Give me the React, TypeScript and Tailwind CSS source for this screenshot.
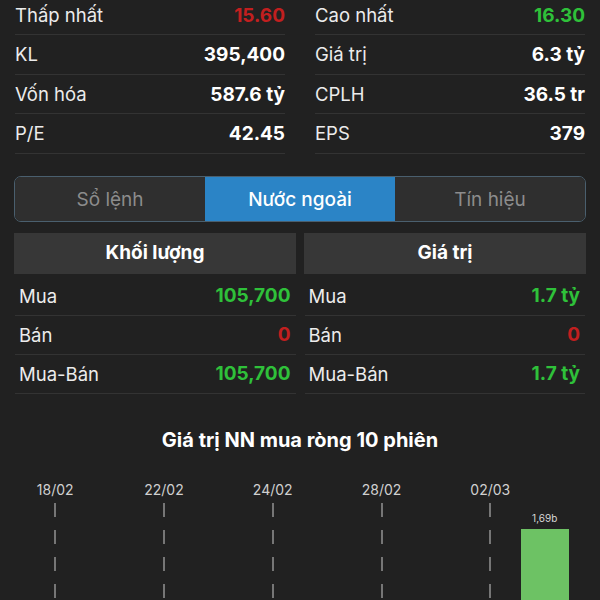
import React from "react";

const stats: [string, string, string?][][] = [
  [
    ["Thấp nhất", "15.60", "red"],
    ["KL", "395,400"],
    ["Vốn hóa", "587.6 tỷ"],
    ["P/E", "42.45"],
  ],
  [
    ["Cao nhất", "16.30", "green"],
    ["Giá trị", "6.3 tỷ"],
    ["CPLH", "36.5 tr"],
    ["EPS", "379"],
  ],
];

const foreign = [
  {
    title: "Khối lượng",
    rows: [
      ["Mua", "105,700", "green"],
      ["Bán", "0", "red"],
      ["Mua-Bán", "105,700", "green"],
    ],
  },
  {
    title: "Giá trị",
    rows: [
      ["Mua", "1.7 tỷ", "green"],
      ["Bán", "0", "red"],
      ["Mua-Bán", "1.7 tỷ", "green"],
    ],
  },
];

const sessions = ["18/02", "", "22/02", "", "24/02", "", "28/02", "", "02/03", ""];

function valueColor(c?: string) {
  if (c === "red") return "text-[#c21f1f]";
  if (c === "green") return "text-[#2fc13a]";
  return "text-white";
}

export default function App() {
  return (
    <div
      className="w-[600px] h-[600px] overflow-hidden bg-[#212121] text-white"
      style={{ fontFamily: "Inter, 'Noto Sans', sans-serif" }}
    >
      {/* Stats */}
      <div className="grid grid-cols-2 gap-x-[30px] px-[15px] -mt-[4.5px]">
        {stats.map((col, ci) => (
          <div key={ci}>
            {col.map(([label, value, color]) => (
              <div
                key={label}
                className="h-[39.5px] pt-[2px] flex items-center justify-between border-b border-[#333333] text-[18.5px]"
              >
                <span className="text-[#ececec]">{label}</span>
                <span className={`font-bold text-[19px] ${valueColor(color)}`}>{value}</span>
              </div>
            ))}
          </div>
        ))}
      </div>

      {/* Tabs */}
      <div className="mx-[14px] mt-[22px] h-[46px] flex rounded-[7px] border border-[#4a5f6e] overflow-hidden text-[19px]">
        <div className="flex-1 pt-[3px] flex items-center justify-center bg-[#2f2f2f] text-[#8c8c8c]">Sổ lệnh</div>
        <div className="flex-1 pt-[3px] flex items-center justify-center bg-[#2b84c6] text-white font-medium">Nước ngoài</div>
        <div className="flex-1 pt-[3px] flex items-center justify-center bg-[#2f2f2f] text-[#8c8c8c]">Tín hiệu</div>
      </div>

      {/* Foreign trading */}
      <div className="grid grid-cols-2 gap-x-[8px] px-[14px] mt-[11px]">
        {foreign.map((f) => (
          <div key={f.title} className="h-[41px] flex items-center justify-center bg-[#373737] font-bold text-[19px]">
            {f.title}
          </div>
        ))}
      </div>
      <div className="grid grid-cols-2 gap-x-[9px] px-[15px] mt-[3.5px]">
        {foreign.map((f) => (
          <div key={f.title}>
            {f.rows.map(([label, value, color]) => (
              <div
                key={label}
                className="h-[39px] pt-[1px] flex items-center justify-between pl-[4px] pr-[5px] border-b border-[#333333] text-[18.5px]"
              >
                <span className="text-[#ececec]">{label}</span>
                <span className={`font-bold text-[19px] ${valueColor(color)}`}>{value}</span>
              </div>
            ))}
          </div>
        ))}
      </div>

      {/* Chart */}
      <div className="mt-[32px] text-center font-bold text-[20px] leading-[28px]">Giá trị NN mua ròng 10 phiên</div>
      <div className="mt-[23px] h-[140px] flex pl-[28px]">
        {sessions.map((d, i) => (
          <div key={i} className="w-[54.4px] h-full flex flex-col items-center">
            <div className="h-[26px] leading-[26px] text-[14px] text-[#d0d0d0]">{d}</div>
            {d && (
              <div className="w-[2px] flex-1 bg-[repeating-linear-gradient(to_bottom,#767676_0_14px,transparent_14px_27px)]" />
            )}
            {i === 9 && (
              <>
                <div className="mt-[8px] h-[14px] leading-[14px] text-[10px] text-[#d8d8d8]">1,69b</div>
                <div className="mt-[4px] w-[48px] flex-1 bg-[#6dc264]" />
              </>
            )}
          </div>
        ))}
      </div>
    </div>
  );
}
